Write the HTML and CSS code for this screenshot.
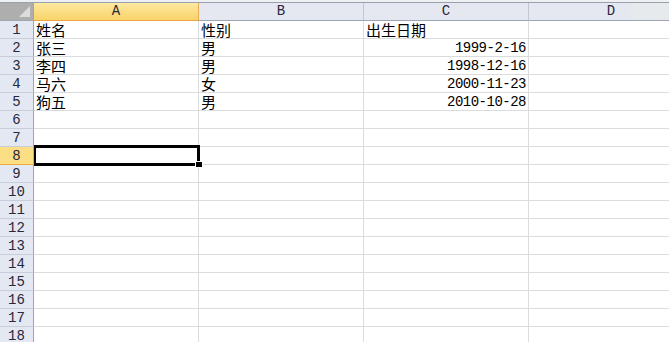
FILE: index.html
```html
<!DOCTYPE html>
<html>
<head>
<meta charset="utf-8">
<link rel="stylesheet" href="styles.css">
</head>
<body>
<div class="sheet">
  <div class="topstrip"></div>
  <div class="grid">
    <div class="corner"><span class="tri"></span></div>
    <div class="colhead sel">A</div>
    <div class="colhead">B</div>
    <div class="colhead">C</div>
    <div class="colhead last">D</div>

    <div class="rowhead">1</div><div class="cell cjk">姓名</div><div class="cell cjk">性别</div><div class="cell cjk">出生日期</div><div class="cell"></div>
    <div class="rowhead">2</div><div class="cell cjk">张三</div><div class="cell cjk">男</div><div class="cell num">1999-2-16</div><div class="cell"></div>
    <div class="rowhead">3</div><div class="cell cjk">李四</div><div class="cell cjk">男</div><div class="cell num">1998-12-16</div><div class="cell"></div>
    <div class="rowhead">4</div><div class="cell cjk">马六</div><div class="cell cjk">女</div><div class="cell num">2000-11-23</div><div class="cell"></div>
    <div class="rowhead">5</div><div class="cell cjk">狗五</div><div class="cell cjk">男</div><div class="cell num">2010-10-28</div><div class="cell"></div>
    <div class="rowhead">6</div><div class="cell"></div><div class="cell"></div><div class="cell"></div><div class="cell"></div>
    <div class="rowhead">7</div><div class="cell"></div><div class="cell"></div><div class="cell"></div><div class="cell"></div>
    <div class="rowhead sel">8</div><div class="cell active"><span class="selbox"></span><span class="handle"></span></div><div class="cell"></div><div class="cell"></div><div class="cell"></div>
    <div class="rowhead">9</div><div class="cell"></div><div class="cell"></div><div class="cell"></div><div class="cell"></div>
    <div class="rowhead">10</div><div class="cell"></div><div class="cell"></div><div class="cell"></div><div class="cell"></div>
    <div class="rowhead">11</div><div class="cell"></div><div class="cell"></div><div class="cell"></div><div class="cell"></div>
    <div class="rowhead">12</div><div class="cell"></div><div class="cell"></div><div class="cell"></div><div class="cell"></div>
    <div class="rowhead">13</div><div class="cell"></div><div class="cell"></div><div class="cell"></div><div class="cell"></div>
    <div class="rowhead">14</div><div class="cell"></div><div class="cell"></div><div class="cell"></div><div class="cell"></div>
    <div class="rowhead">15</div><div class="cell"></div><div class="cell"></div><div class="cell"></div><div class="cell"></div>
    <div class="rowhead">16</div><div class="cell"></div><div class="cell"></div><div class="cell"></div><div class="cell"></div>
    <div class="rowhead">17</div><div class="cell"></div><div class="cell"></div><div class="cell"></div><div class="cell"></div>
    <div class="rowhead">18</div><div class="cell"></div><div class="cell"></div><div class="cell"></div><div class="cell"></div>
  </div>
</div>
</body>
</html>
```

FILE: styles.css
```css
html, body {
  margin: 0;
  padding: 0;
  background: #ffffff;
  overflow: hidden;
}
.sheet {
  width: 669px;
  height: 342px;
  overflow: hidden;
}
.topstrip {
  height: 2px;
  background: #eef0f4;
  border-bottom: 1px solid #9aa1ad;
}
.grid {
  display: grid;
  grid-template-columns: 34px repeat(4, 165px);
  grid-auto-rows: 18px;
  width: 694px;
}
.grid > div {
  box-sizing: border-box;
  border-right: 1px solid #dadcdd;
  border-bottom: 1px solid #dadcdd;
}
.corner {
  position: relative;
  background-color: #aeaeae;
  background-image: radial-gradient(#a4a4a4 0.6px, transparent 0.7px);
  background-size: 2px 2px;
  border-right: 1px solid #9ea6b6 !important;
  border-bottom: 1px solid #9ea6b6 !important;
}
.tri {
  position: absolute;
  right: 3px;
  bottom: 3px;
  width: 0;
  height: 0;
  border-left: 11px solid transparent;
  border-bottom: 11px solid #dcdcdc;
}
.colhead {
  background-color: #e6e8f1;
  background-image: radial-gradient(#dcdfea 0.6px, transparent 0.7px);
  background-size: 2px 2px;
  border-right: 1px solid #c2c6d0 !important;
  border-bottom: 1px solid #9ea6b6 !important;
  font-family: "Liberation Mono", monospace;
  font-size: 14px;
  line-height: 17px;
  color: #27283a;
  text-align: center;
}
.colhead.sel {
  background: linear-gradient(#fdeaa0, #fbdc82 55%, #f9d46a);
  border-right: 1px solid #e4ad55 !important;
  border-bottom: 1px solid #eea640 !important;
}
.colhead.last {
  background: linear-gradient(90deg, #e6e8f1 0, #e6e8f1 101px, #e7eaec 101px);
}
.rowhead {
  background: #e4e8f3;
  border-right: 1px solid #9ea6b6 !important;
  border-bottom: 1px solid #c8cdd9 !important;
  font-family: "Liberation Mono", monospace;
  font-size: 14px;
  line-height: 18px;
  color: #27283a;
  text-align: center;
}
.rowhead.sel {
  background: #fcdf84;
  border-right: 1px solid #eea640 !important;
  border-bottom: 1px solid #eea640 !important;
}
.cell {
  color: #000;
  white-space: nowrap;
  overflow: visible;
}
.cjk {
  font-family: "Noto Sans CJK SC", sans-serif;
  font-size: 15px;
  line-height: 17px;
  padding-left: 2px;
}
.num {
  font-family: "Liberation Mono", "Noto Sans CJK SC", monospace;
  font-size: 14px;
  letter-spacing: -0.5px;
  line-height: 18px;
  text-align: right;
  padding-right: 2px;
}
.active {
  position: relative;
}
.selbox {
  position: absolute;
  left: 0;
  top: -2px;
  width: 166px;
  height: 21px;
  box-sizing: border-box;
  border-style: solid;
  border-color: #000;
  border-width: 3px 3px 3px 2px;
}
.handle {
  position: absolute;
  left: 162px;
  top: 15px;
  width: 6px;
  height: 5px;
  background: #000;
  outline: 1px solid #fff;
}
```
